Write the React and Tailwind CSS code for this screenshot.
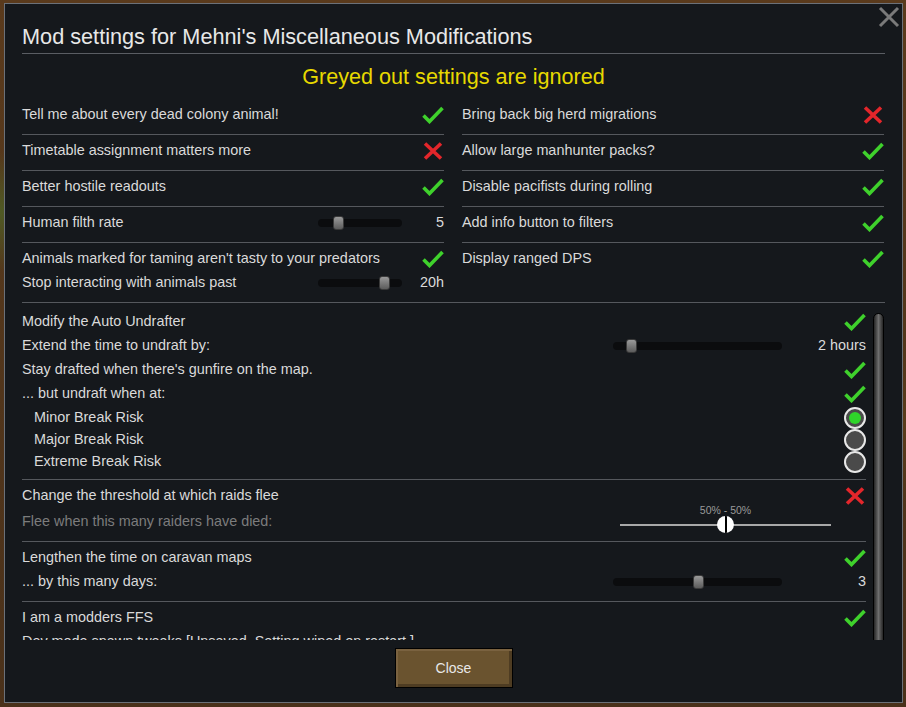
const FONT = { fontFamily: '"Liberation Sans", Arial, sans-serif' };

function Check() {
  return (
    <svg width="22" height="18" viewBox="0 0 22 18" className="shrink-0">
      <path d="M1.5 9.5 L7.5 15.5 L20.5 2" fill="none" stroke="#3fd12c" strokeWidth="3.6" />
    </svg>
  );
}

function Cross() {
  return (
    <svg width="22" height="18" viewBox="0 0 22 18" className="shrink-0">
      <path d="M3 1.5 L19 16.5 M19 1.5 L3 16.5" fill="none" stroke="#e3262b" strokeWidth="3.6" />
    </svg>
  );
}

function Radio({ on }) {
  return (
    <div className="flex h-[22px] w-[22px] shrink-0 items-center justify-center rounded-full border-2 border-[#e8e8e8] bg-[#4a4a4a]">
      {on && <div className="h-[12px] w-[12px] rounded-full bg-[#2fd52a]" />}
    </div>
  );
}

function Slider({ width, pos }) {
  return (
    <div className="relative h-[8px] shrink-0 rounded-full bg-[#0b0c0e]" style={{ width }}>
      <div
        className="absolute top-[-3px] h-[14px] w-[11px] rounded-[3px] border border-[#3a3a3a] bg-gradient-to-b from-[#9a9a9a] to-[#5c5c5c]"
        style={{ left: pos }}
      />
    </div>
  );
}

function Row({ label, icon, last, children }) {
  return (
    <div className={`h-[36px] pt-[4px] ${last ? "" : "border-b border-[#55585d]"}`}>
      <div className="flex h-6 items-center justify-between">
        <span>{label}</span>
        {icon}
        {children}
      </div>
    </div>
  );
}

function Line({ label, className = "", children }) {
  return (
    <div className={`flex h-6 items-center justify-between ${className}`}>
      <span className="whitespace-nowrap">{label}</span>
      {children}
    </div>
  );
}

function Sep() {
  return <div className="h-px bg-[#55585d]" />;
}

export default function App() {
  return (
    <div
      className="h-[707px] w-[906px] overflow-hidden bg-[#4c3219] pl-[4px] pt-[3px] text-[14.4px] text-[#dadada]"
      style={{
        ...FONT,
        backgroundImage:
          "radial-gradient(circle at 0% 30%, #4f5a24 0, transparent 60px), radial-gradient(circle at 100% 60%, #5a3c1c 0, transparent 80px), linear-gradient(#5a3a1c, #4a311a)",
      }}
    >
      <div className="relative flex h-[700px] w-[899px] flex-col border border-[#6c7179] bg-[#15181c] px-[17px] pt-[21px]">
        <svg width="22" height="22" viewBox="0 0 22 22" className="absolute right-[2px] top-[2px]">
          <path d="M2 2 L20 20 M20 2 L2 20" fill="none" stroke="#7a7a7a" strokeWidth="3" />
        </svg>

        <div className="h-6 whitespace-nowrap text-[21.7px] leading-6 text-[#e8e8e8]">
          Mod settings for Mehni's Miscellaneous Modifications
        </div>
        <div className="mt-[4px] h-px bg-[#5a5d63]" />
        <div className="mt-[11px] h-6 text-center text-[21.6px] leading-6 text-[#e7d800]">
          Greyed out settings are ignored
        </div>

        <div className="mt-[10px] grid w-[862px] grid-cols-[422px_422px] gap-x-[18px]">
          <div>
            <Row label="Tell me about every dead colony animal!" icon={<Check />} />
            <Row label="Timetable assignment matters more" icon={<Cross />} />
            <Row label="Better hostile readouts" icon={<Check />} />
            <Row label="Human filth rate">
              <div className="flex items-center">
                <Slider width={84} pos={15} />
                <span className="w-[42px] text-right">5</span>
              </div>
            </Row>
            <div className="h-[59px] pt-[4px]">
              <Line label="Animals marked for taming aren't tasty to your predators">
                <Check />
              </Line>
              <Line label="Stop interacting with animals past">
                <div className="flex items-center">
                  <Slider width={84} pos={61} />
                  <span className="w-[42px] text-right">20h</span>
                </div>
              </Line>
            </div>
          </div>
          <div>
            <Row label="Bring back big herd migrations" icon={<Cross />} />
            <Row label="Allow large manhunter packs?" icon={<Check />} />
            <Row label="Disable pacifists during rolling" icon={<Check />} />
            <Row label="Add info button to filters" icon={<Check />} />
            <div className="h-[59px] pt-[4px]">
              <Line label="Display ranged DPS">
                <Check />
              </Line>
            </div>
          </div>
        </div>
        <Sep />

        <div className="flex h-[337px] gap-[7px] overflow-hidden">
          <div className="w-[844px] pt-[7px]">
            <Line label="Modify the Auto Undrafter">
              <Check />
            </Line>
            <Line label="Extend the time to undraft by:">
              <div className="flex items-center">
                <Slider width={169} pos={13} />
                <span className="w-[84px] text-right">2 hours</span>
              </div>
            </Line>
            <Line label="Stay drafted when there's gunfire on the map.">
              <Check />
            </Line>
            <Line label="... but undraft when at:">
              <Check />
            </Line>
            <div className="pt-px">
              {[
                ["Minor Break Risk", true],
                ["Major Break Risk", false],
                ["Extreme Break Risk", false],
              ].map(([label, on]) => (
                <div key={label} className="flex h-[22px] items-center justify-between pl-[12px]">
                  <span>{label}</span>
                  <Radio on={on} />
                </div>
              ))}
            </div>
            <div className="mt-[6px]">
              <Sep />
            </div>
            <div className="pt-[4px]">
              <Line label="Change the threshold at which raids flee">
                <Cross />
              </Line>
              <div className="flex h-[27px] items-center justify-between text-[#7c7c7c]">
                <span>Flee when this many raiders have died:</span>
                <div className="relative mr-[35px] mt-[6px] h-[2px] w-[211px] bg-[#a8a8a8]">
                  <div className="absolute left-[97px] top-[-8px] flex h-[17px] w-[17px] justify-center overflow-hidden rounded-full bg-white">
                    <div className="h-full w-[2px] bg-black" />
                  </div>
                  <span className="absolute left-0 right-0 top-[-20px] text-center text-[10.5px] leading-3 text-[#9a9a9a]">
                    50% - 50%
                  </span>
                </div>
              </div>
            </div>
            <div className="mt-[6px]">
              <Sep />
            </div>
            <div className="pt-[4px]">
              <Line label="Lengthen the time on caravan maps">
                <Check />
              </Line>
              <Line label="... by this many days:">
                <div className="flex items-center">
                  <Slider width={169} pos={80} />
                  <span className="w-[84px] text-right">3</span>
                </div>
              </Line>
            </div>
            <div className="mt-[7px]">
              <Sep />
            </div>
            <div className="pt-[4px]">
              <Line label="I am a modders FFS">
                <Check />
              </Line>
              <Line label="Dev mode spawn tweaks [Unsaved. Setting wiped on restart.]" />
            </div>
          </div>
          <div className="mt-[10px] h-[340px] w-[11px] rounded-t-full border border-black bg-gradient-to-r from-[#262626] via-[#6e6e6e] to-[#262626]" />
        </div>

        <div className="mt-[8px] flex justify-center">
          <button
            className="h-[40px] w-[118px] border border-black bg-[#6a532f] text-[14px] text-[#e8e8e8] shadow-[inset_2px_2px_0_#7a6240,inset_-3px_-3px_0_#4e3c22]"
            style={FONT}
          >
            Close
          </button>
        </div>
      </div>
    </div>
  );
}
